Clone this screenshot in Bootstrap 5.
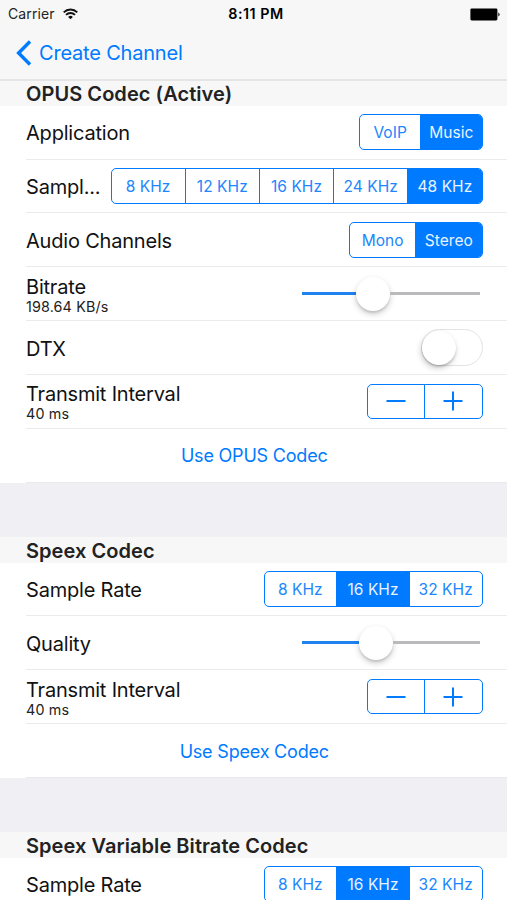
<!DOCTYPE html>
<html lang="en">
<head>
<meta charset="utf-8">
<meta name="viewport" content="width=device-width, initial-scale=1">
<title>Create Channel</title>
<link href="https://cdn.jsdelivr.net/npm/bootstrap@5.3.0/dist/css/bootstrap.min.css" rel="stylesheet">
<style>
:root{--tint:#007aff;--edge:26px}
html,body{height:900px;overflow:hidden}
body{font-family:Inter,"Liberation Sans",sans-serif;background:#fff;color:#111;font-size:20px;line-height:1.2;letter-spacing:-.2px}
.top-bar{height:80.5px;background:#f7f7f7;border-bottom:2px solid #e5e5e5}
.status{height:28px;font-size:14px;letter-spacing:.1px;padding:0 7px 0 8px;color:#222}
.clock{font-size:14.3px;letter-spacing:.5px;color:#000;padding-left:4px}
.back{height:49px;padding-left:16px;color:var(--tint);letter-spacing:-.2px}
.back:hover{color:var(--tint)}
.back span{margin-left:7px}
.section-head{height:26px;padding:2px 0 0 var(--edge);background:#f7f7f7;font-size:20px;font-weight:600;letter-spacing:.06px;color:#222}
.first-head{height:25.3px;padding-top:2px}
.setting{height:53.85px;margin-left:var(--edge);padding-right:24.5px;border-bottom:1.5px solid #ebebec}
.setting>.title{padding-top:2px}
.setting.last-row{border-color:#e9e9ed}
.gap-band{height:53.85px;background:#efeff4}
.sub{font-size:14.3px;letter-spacing:.15px;line-height:17px;color:#222}
.two-line{padding-top:3px}
.two-line .title{line-height:22px}
.use-link{font-size:18px;letter-spacing:-.2px;color:var(--tint);padding-top:2px}
.seg{height:35.5px;border:1.5px solid var(--tint);border-radius:5px;overflow:hidden;background:#fff}
.seg .btn{flex:1 1 0;padding:0;border:0;border-radius:0;border-left:1.5px solid var(--tint);color:#2186fb;font-size:15.5px;letter-spacing:.05px;line-height:35px}
.seg .btn:first-child{border-left:0}
.seg .btn.active{background:var(--tint);color:#e9f3ff}
.seg-app{width:123.5px}.seg-wide{width:372px}.seg-ch{width:133.5px}.seg-rate{width:219px}.stepper{width:115.3px}
.slider{width:178px;height:34px;margin-right:2.5px}
.slider .fill{height:3px;background:#1f82ee}
.slider .rest{height:3px;background:#bababc}
.knob{width:34px;height:34px;border-radius:50%;background:#fff;box-shadow:0 3px 6px rgba(0,0,0,.2),0 2px 2px rgba(0,0,0,.1)}
.toggle{width:62px;height:37px;border:1.5px solid #e3e3e3;border-radius:19px}
.toggle .knob{box-shadow:-1px 3px 6px rgba(0,0,0,.2),0 2px 2px rgba(0,0,0,.14)}
</style>
</head>
<body>
<header class="top-bar">
  <div class="status row g-0 align-items-center">
    <div class="col d-flex align-items-center"><span>Carrier</span>
      <svg class="ms-2" width="15" height="12" viewBox="0 0 15 12" fill="none" stroke="#111" stroke-width="1.8"><path d="M.7 4.3a9.6 9.6 0 0 1 13.6 0M3 6.9a6.3 6.3 0 0 1 9 0"/><path d="M7.5 11.3 5.1 8.9a3.5 3.5 0 0 1 4.8 0z" fill="#111" stroke="none"/></svg>
    </div>
    <div class="col-auto clock fw-semibold">8:11 PM</div>
    <div class="col d-flex justify-content-end">
      <svg width="30" height="13" viewBox="0 0 30 13"><rect x=".4" y=".4" width="27" height="12" rx="1.3" fill="#000"/><path d="M28.2 4.4q1.5.7 1.5 2t-1.5 2z" fill="#333"/></svg>
    </div>
  </div>
  <a href="#" class="back d-flex align-items-center text-decoration-none">
    <svg width="16" height="26" viewBox="0 0 16 26" fill="none" stroke="currentColor" stroke-width="3.4"><path d="M14 1.5 2.6 13 14 24.5"/></svg>
    <span>Create Channel</span>
  </a>
</header>
<main>
  <section>
    <div class="section-head first-head d-flex align-items-center">OPUS Codec (Active)</div>
    <div class="setting d-flex align-items-center justify-content-between"><span class="title">Application</span>
      <div class="seg seg-app d-flex"><button class="btn">VoIP</button><button class="btn active">Music</button></div></div>
    <div class="setting d-flex align-items-center justify-content-between"><span class="title">Sampl...</span>
      <div class="seg seg-wide d-flex"><button class="btn">8 KHz</button><button class="btn">12 KHz</button><button class="btn">16 KHz</button><button class="btn">24 KHz</button><button class="btn active">48 KHz</button></div></div>
    <div class="setting d-flex align-items-center justify-content-between"><span class="title">Audio Channels</span>
      <div class="seg seg-ch d-flex"><button class="btn">Mono</button><button class="btn active">Stereo</button></div></div>
    <div class="setting d-flex align-items-center justify-content-between">
      <div class="two-line"><div class="title">Bitrate</div><div class="sub">198.64 KB/s</div></div>
      <div class="slider d-flex align-items-center"><div class="fill" style="width:54px"></div><div class="knob flex-shrink-0"></div><div class="rest flex-fill"></div></div></div>
    <div class="setting d-flex align-items-center justify-content-between"><span class="title">DTX</span>
      <div class="toggle d-flex align-items-center"><div class="knob"></div></div></div>
    <div class="setting d-flex align-items-center justify-content-between">
      <div class="two-line"><div class="title">Transmit Interval</div><div class="sub">40 ms</div></div>
      <div class="seg stepper d-flex">
        <button class="btn d-flex align-items-center justify-content-center" aria-label="Decrease"><svg width="20" height="20" stroke="#007aff" stroke-width="2"><path d="M.5 10h19"/></svg></button>
        <button class="btn d-flex align-items-center justify-content-center" aria-label="Increase"><svg width="20" height="20" stroke="#007aff" stroke-width="2"><path d="M.5 10h19M10 .5v19"/></svg></button>
      </div></div>
    <div class="setting last-row d-flex align-items-center justify-content-center"><span class="use-link">Use OPUS Codec</span></div>
    <div class="gap-band"></div>
  </section>
  <section>
    <div class="section-head d-flex align-items-center">Speex Codec</div>
    <div class="setting d-flex align-items-center justify-content-between"><span class="title">Sample Rate</span>
      <div class="seg seg-rate d-flex"><button class="btn">8 KHz</button><button class="btn active">16 KHz</button><button class="btn">32 KHz</button></div></div>
    <div class="setting d-flex align-items-center justify-content-between"><span class="title">Quality</span>
      <div class="slider d-flex align-items-center"><div class="fill" style="width:57px"></div><div class="knob flex-shrink-0"></div><div class="rest flex-fill"></div></div></div>
    <div class="setting d-flex align-items-center justify-content-between">
      <div class="two-line"><div class="title">Transmit Interval</div><div class="sub">40 ms</div></div>
      <div class="seg stepper d-flex">
        <button class="btn d-flex align-items-center justify-content-center" aria-label="Decrease"><svg width="20" height="20" stroke="#007aff" stroke-width="2"><path d="M.5 10h19"/></svg></button>
        <button class="btn d-flex align-items-center justify-content-center" aria-label="Increase"><svg width="20" height="20" stroke="#007aff" stroke-width="2"><path d="M.5 10h19M10 .5v19"/></svg></button>
      </div></div>
    <div class="setting last-row d-flex align-items-center justify-content-center"><span class="use-link">Use Speex Codec</span></div>
    <div class="gap-band"></div>
  </section>
  <section>
    <div class="section-head d-flex align-items-center">Speex Variable Bitrate Codec</div>
    <div class="setting d-flex align-items-center justify-content-between"><span class="title">Sample Rate</span>
      <div class="seg seg-rate d-flex"><button class="btn">8 KHz</button><button class="btn active">16 KHz</button><button class="btn">32 KHz</button></div></div>
  </section>
</main>
<script src="https://cdn.jsdelivr.net/npm/bootstrap@5.3.0/dist/js/bootstrap.bundle.min.js"></script>
</body>
</html>
